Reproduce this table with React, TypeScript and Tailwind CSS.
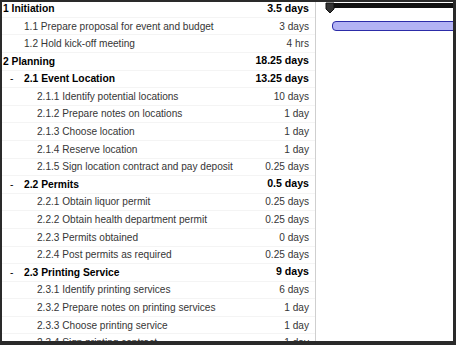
import React from "react";

type Row = {
  label: string;
  duration: string;
  level: 1 | 2 | 3;
  bold?: boolean;
  collapsible?: boolean;
};

const rows: Row[] = [
  { label: "1 Initiation", duration: "3.5 days", level: 1, bold: true },
  { label: "1.1 Prepare proposal for event and budget", duration: "3 days", level: 2 },
  { label: "1.2 Hold kick-off meeting", duration: "4 hrs", level: 2 },
  { label: "2 Planning", duration: "18.25 days", level: 1, bold: true },
  { label: "2.1 Event Location", duration: "13.25 days", level: 2, bold: true, collapsible: true },
  { label: "2.1.1 Identify potential locations", duration: "10 days", level: 3 },
  { label: "2.1.2 Prepare notes on locations", duration: "1 day", level: 3 },
  { label: "2.1.3 Choose location", duration: "1 day", level: 3 },
  { label: "2.1.4 Reserve location", duration: "1 day", level: 3 },
  { label: "2.1.5 Sign location contract and pay deposit", duration: "0.25 days", level: 3 },
  { label: "2.2 Permits", duration: "0.5 days", level: 2, bold: true, collapsible: true },
  { label: "2.2.1 Obtain liquor permit", duration: "0.25 days", level: 3 },
  { label: "2.2.2 Obtain health department permit", duration: "0.25 days", level: 3 },
  { label: "2.2.3 Permits obtained", duration: "0 days", level: 3 },
  { label: "2.2.4 Post permits as required", duration: "0.25 days", level: 3 },
  { label: "2.3 Printing Service", duration: "9 days", level: 2, bold: true, collapsible: true },
  { label: "2.3.1 Identify printing services", duration: "6 days", level: 3 },
  { label: "2.3.2 Prepare notes on printing services", duration: "1 day", level: 3 },
  { label: "2.3.3 Choose printing service", duration: "1 day", level: 3 },
  { label: "2.3.4 Sign printing contract", duration: "1 day", level: 3 },
];

function TaskRow({ row }: { row: Row }) {
  const indent =
    row.level === 1 ? "pl-[1px]" : row.level === 2 ? (row.collapsible ? "pl-[8px]" : "pl-[22px]") : "pl-[35px]";
  const nameStyle = row.bold ? "font-bold text-black text-[10.3px]" : "text-[#363636] text-[10.1px]";
  const durStyle = row.bold ? "font-bold text-black text-[10.6px]" : "text-[#363636] text-[10.1px]";

  return (
    <div className="flex h-[17.6px] shrink-0 items-center border-b border-[#f4f4f4]">
      <div className={`flex w-[236px] items-center whitespace-nowrap ${indent} ${nameStyle}`}>
        {row.collapsible && <span className="w-[14px] font-normal">-</span>}
        {row.label}
      </div>
      <div className={`w-[78px] whitespace-nowrap pr-[6px] text-right ${durStyle}`}>{row.duration}</div>
    </div>
  );
}

export default function App() {
  return (
    <div className="h-[345px] w-[456px] bg-[#2a2a2a] pb-[4px] pl-[2px] pr-[3px] pt-[2px]">
      <div
        className="flex h-full w-full overflow-hidden bg-white"
        style={{ fontFamily: '"Liberation Sans", Arial, sans-serif' }}
      >
        {/* task table */}
        <div className="flex w-[314px] shrink-0 flex-col border-r border-[#cfcfcf]">
          <div className="-mt-[1.8px] flex flex-col">
            {rows.map((row) => (
              <TaskRow key={row.label} row={row} />
            ))}
          </div>
        </div>

        {/* gantt chart */}
        <div className="relative flex-1 overflow-hidden">
          <div className="absolute left-[10px] right-0 top-[1px] h-[5px] bg-[#111]" />
          <svg className="absolute left-[9px] top-[0px]" width="10" height="12" viewBox="0 0 10 12">
            <path d="M1 1 H9 V7 L5 11 L1 7 Z" fill="#333" stroke="#111" strokeWidth="1" />
          </svg>
          <div className="absolute -right-[6px] left-[16px] top-[19px] h-[10px] rounded-[4px] border border-[#2c2ca8] bg-[#b3b3f4]" />
        </div>
      </div>
    </div>
  );
}
